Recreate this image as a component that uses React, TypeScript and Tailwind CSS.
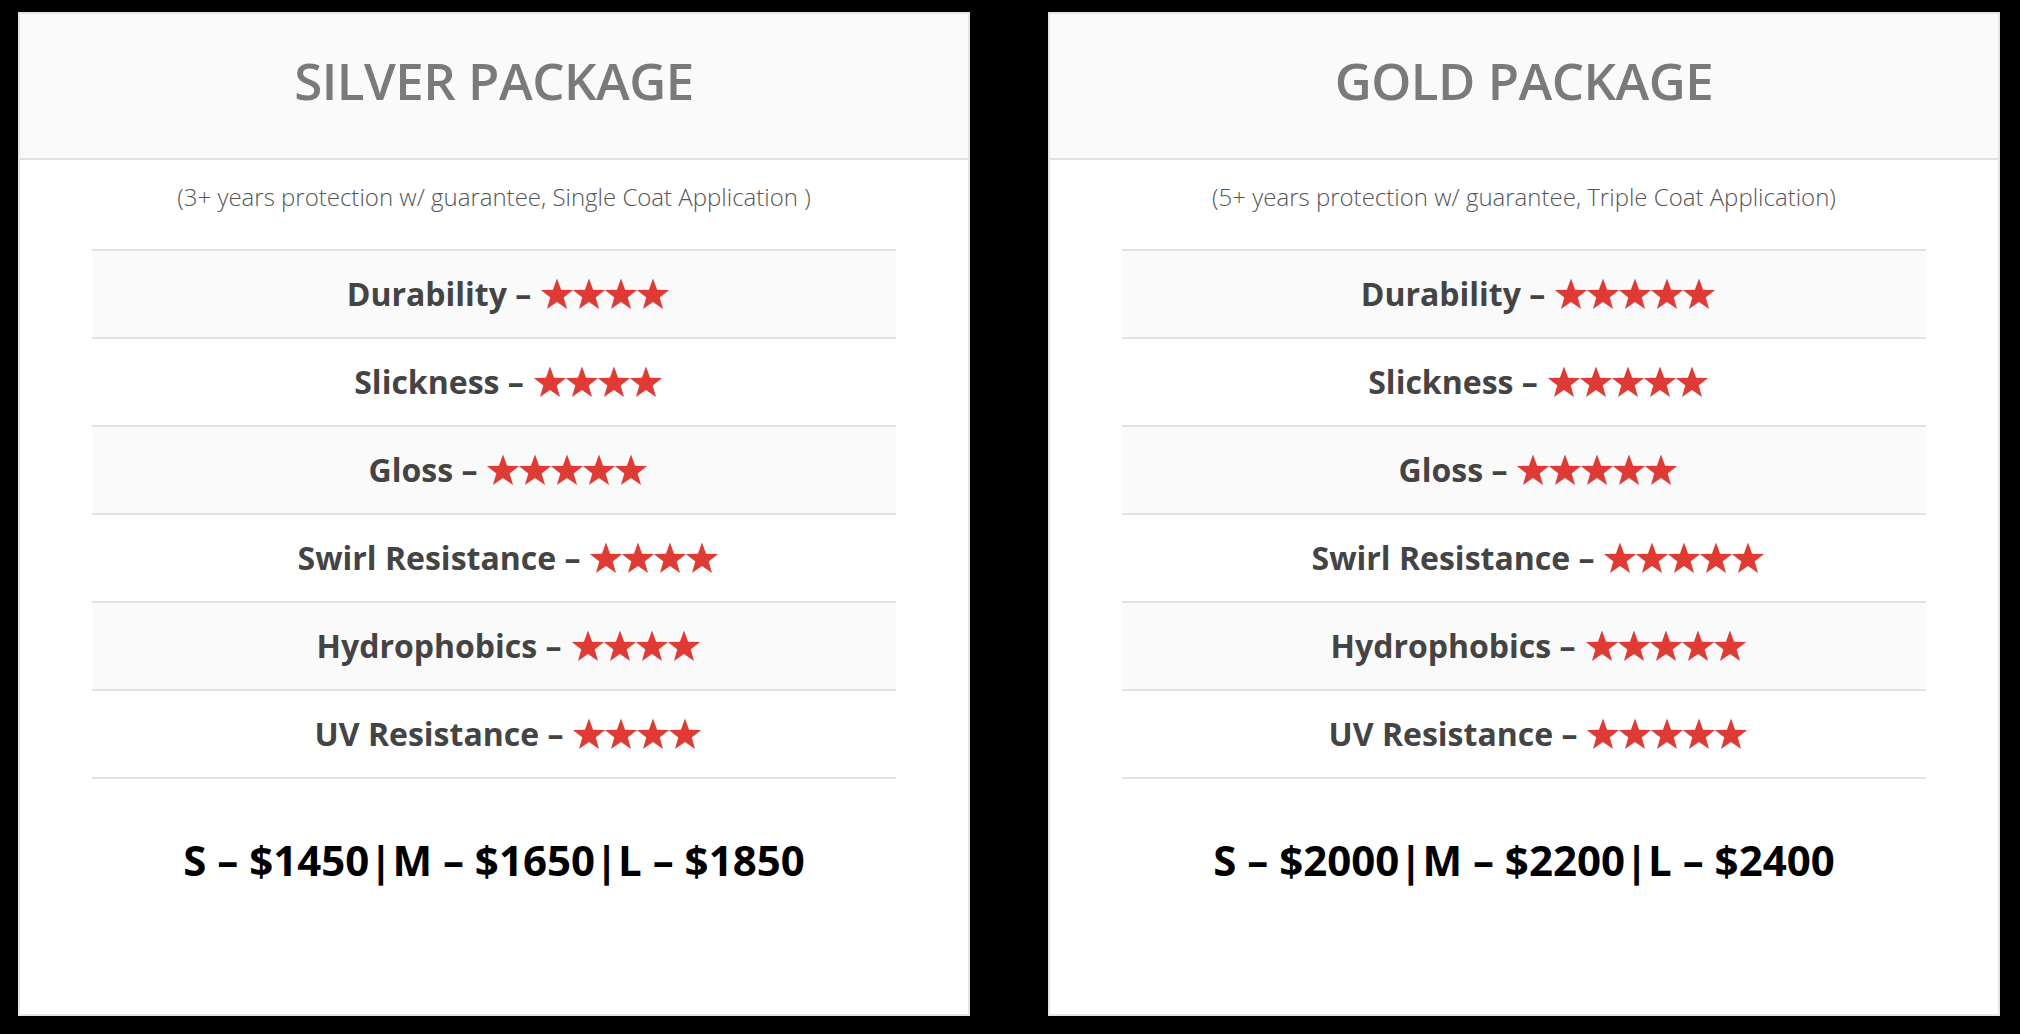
const packages = [
  {
    name: "SILVER PACKAGE",
    note: "(3+ years protection w/ guarantee, Single Coat Application )",
    ratings: [
      { label: "Durability", stars: 4 },
      { label: "Slickness", stars: 4 },
      { label: "Gloss", stars: 5 },
      { label: "Swirl Resistance", stars: 4 },
      { label: "Hydrophobics", stars: 4 },
      { label: "UV Resistance", stars: 4 },
    ],
    prices: ["S – $1450", "M – $1650", "L – $1850"],
  },
  {
    name: "GOLD PACKAGE",
    note: "(5+ years protection w/ guarantee, Triple Coat Application)",
    ratings: [
      { label: "Durability", stars: 5 },
      { label: "Slickness", stars: 5 },
      { label: "Gloss", stars: 5 },
      { label: "Swirl Resistance", stars: 5 },
      { label: "Hydrophobics", stars: 5 },
      { label: "UV Resistance", stars: 5 },
    ],
    prices: ["S – $2000", "M – $2200", "L – $2400"],
  },
];

function Star() {
  return (
    <svg viewBox="0 0 24 24" className="w-[34px] h-[34px] -mx-[1px]" aria-hidden="true">
      <polygon
        points="12,1 14.9,9 23.4,9.2 16.7,14.4 19.1,22.6 12,17.7 4.9,22.6 7.3,14.4 0.6,9.2 9.1,9"
        fill="#e03a35"
      />
    </svg>
  );
}

function PackageCard({ pkg }: { pkg: (typeof packages)[number] }) {
  return (
    <div className="w-[952px] h-[1004px] bg-white border-2 border-[#e4e4e4] flex flex-col">
      {/* header */}
      <div className="h-[146px] bg-[#fafafa] border-b-2 border-[#e2e2e2] flex items-center justify-center">
        <h2 className="text-[51px] font-semibold text-[#7a7a7a] tracking-[-0.5px] leading-none pb-[12px]">{pkg.name}</h2>
      </div>

      <p className="text-center text-[24px] font-light text-[#555] pt-[21px] pb-[36px] leading-[32px]">{pkg.note}</p>

      <div className="mx-[72px] border-t-2 border-[#e2e2e2]">
        {pkg.ratings.map((r, i) => (
          <div
            key={r.label}
            className={`h-[88px] flex items-center justify-center gap-[10px] pl-[28px] border-b-2 border-[#e2e2e2] ${
              i % 2 === 0 ? "bg-[#fafafa]" : "bg-white"
            }`}
          >
            <span className="text-[32px] font-bold text-[#444]">{r.label} –</span>
            <span className="flex items-center">
              {Array.from({ length: r.stars }).map((_, k) => (
                <Star key={k} />
              ))}
            </span>
          </div>
        ))}
      </div>

      <div className="pt-[60px] text-center text-[42px] font-bold text-black leading-none">
        {pkg.prices.join("|")}
      </div>
    </div>
  );
}

export default function App() {
  return (
    <div
      className="min-h-screen w-[2020px] h-[1034px] bg-black flex gap-[78px] pl-[18px] pt-[12px] overflow-hidden"
      style={{ fontFamily: '"Open Sans", sans-serif' }}
    >
      {packages.map((p) => (
        <PackageCard key={p.name} pkg={p} />
      ))}
    </div>
  );
}
